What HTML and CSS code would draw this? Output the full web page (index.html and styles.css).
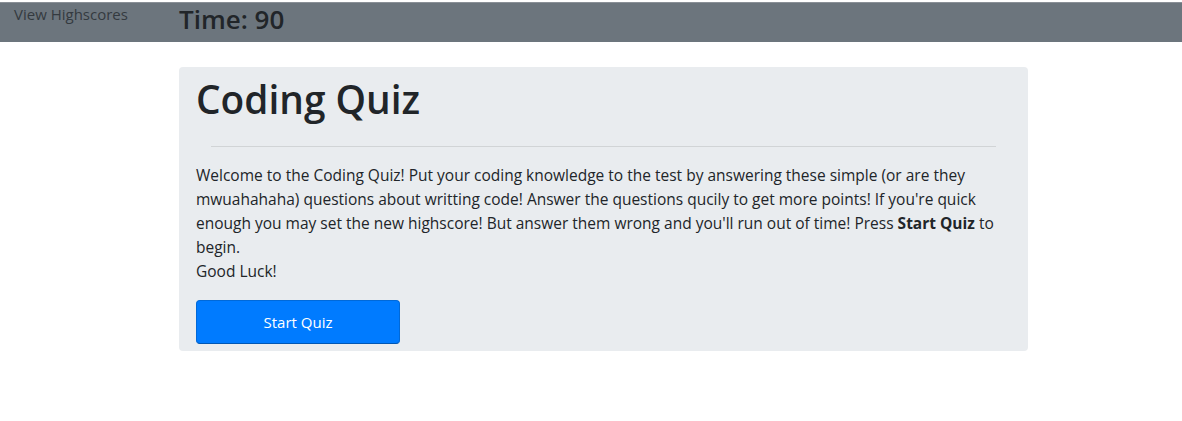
FILE: index.html
```html
<!DOCTYPE html>
<html lang="en">
<head>
<meta charset="utf-8">
<title>Coding Quiz</title>
<link rel="stylesheet" href="styles.css">
</head>
<body>
<header class="topbar">
  <a class="highscores" href="#">View Highscores</a>
  <div class="timer">Time: 90</div>
</header>
<main class="container">
  <section class="jumbo">
    <h1 class="title">Coding Quiz</h1>
    <hr class="rule">
    <p class="intro">Welcome to the Coding Quiz! Put your coding knowledge to the test by answering these simple (or are they mwuahahaha) questions about writting code! Answer the questions qucily to get more points! If you're quick enough you may set the new highscore! But answer them wrong and you'll run out of time! Press <strong>Start Quiz</strong> to begin.<br>Good Luck!</p>
    <button class="start">Start Quiz</button>
  </section>
</main>
</body>
</html>
```
FILE: styles.css
```css
* { box-sizing: border-box; }
body {
  margin: 0;
  font-family: "Open Sans", "Noto Sans", sans-serif;
  color: #212529;
  background: #fff;
}
.topbar {
  margin-top: 2px;
  height: 40px;
  background: #6c757d;
  border-top: 1px solid #8a9097;
  display: flex;
  align-items: flex-start;
}
.highscores {
  width: 179px;
  padding: 1px 0 0 14px;
  font-size: 15px;
  color: #343a40;
  text-decoration: none;
}
.timer {
  font-size: 26px;
  font-weight: 600;
  line-height: 32px;
  color: #212529;
}
.container {
  padding: 25px 0 0 179px;
}
.jumbo {
  width: 849px;
  height: 284px;
  background: #e9ecef;
  border-radius: 4px;
  padding: 4px 17px 8px;
}
.title {
  margin: 0;
  font-size: 38.8px;
  font-weight: 600;
  line-height: 56px;
}
.rule {
  margin: 19px 15px 16px;
  border: 0;
  border-top: 1px solid rgba(0,0,0,0.1);
}
.intro {
  margin: 0 0 17px;
  font-size: 15.5px;
  line-height: 24px;
}
.start {
  width: 204px;
  height: 44px;
  background: #007bff;
  color: #fff;
  border: 1px solid #0069d9;
  border-bottom-color: #0056b3;
  border-radius: 4px;
  font-family: inherit;
  font-size: 15px;
}
```
